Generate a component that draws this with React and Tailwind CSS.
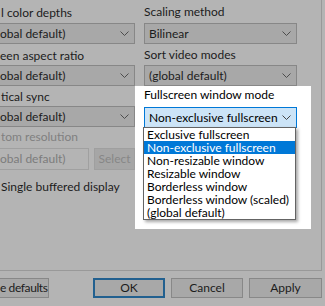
import React from "react";

const font = { fontFamily: "Lato, 'Liberation Sans', Arial, sans-serif" };

function Chevron({ color = "#4d4d4d" }) {
  return (
    <svg width="9" height="5" viewBox="0 0 9 5" className="shrink-0">
      <polyline points="0.5,0.5 4.5,4.5 8.5,0.5" fill="none" stroke={color} strokeWidth="1" />
    </svg>
  );
}

function Combo({ text, className = "", textClass = "pl-[4px]" }) {
  return (
    <div
      className={`flex h-[21px] items-center justify-between border border-[#878787] bg-[#a8a8a8] pr-[5px] text-[#1c1c1c] ${className}`}
    >
      <span className={`whitespace-nowrap leading-none ${textClass}`}>{text}</span>
      <Chevron />
    </div>
  );
}

function Label({ children, className = "" }) {
  return <div className={`h-[14px] whitespace-nowrap leading-[14px] text-[#1c1c1c] ${className}`}>{children}</div>;
}

const modes = [
  "Exclusive fullscreen",
  "Non-exclusive fullscreen",
  "Non-resizable window",
  "Resizable window",
  "Borderless window",
  "Borderless window (scaled)",
  "(global default)",
];

export default function App() {
  const selected = 1;

  return (
    <div className="flex h-[306px] w-[325px] flex-col overflow-hidden bg-[#b4b4b4] text-[12px]" style={font}>
      {/* tab panel */}
      <div className="flex h-[271px] w-[322px] shrink-0 items-start border-r border-b border-[#999999]">
        {/* left column, clipped by the window edge */}
        <div className="flex w-[135px] shrink-0 flex-col">
          <Label className="mt-[6px] pl-[1px]">l color depths</Label>
          <Combo text="obal default)" className="mt-[3px] border-l-0" textClass="pl-0" />
          <Label className="mt-[5px]">een aspect ratio</Label>
          <Combo text="obal default)" className="mt-[2px] border-l-0" textClass="pl-0" />
          <Label className="mt-[4px] pl-[1px]">tical sync</Label>
          <Combo text="obal default)" className="mt-[2px] border-l-0" textClass="pl-0" />
          <Label className="mt-[3px] pl-[1px] !text-[#808080]">tom resolution</Label>
          <div className="mt-[4px] flex h-[22px] gap-[5px]">
            <div className="flex w-[89px] items-center border border-l-0 border-[#a0a0a0] text-[#7c7c7c]">
              <span className="whitespace-nowrap leading-none">obal default)</span>
            </div>
            <div className="flex w-[41px] items-center justify-center border border-[#9f9f9f] bg-[#a6a6a6] text-[#868686]">
              <span className="leading-none">Select</span>
            </div>
          </div>
          <Label className="mt-[10px] pl-[1px]">Single buffered display</Label>
        </div>

        {/* right column */}
        <div className="ml-[9px] flex w-[153px] shrink-0 flex-col">
          <Label className="mt-[5px]">Scaling method</Label>
          <Combo text="Bilinear" className="mt-[4px]" />
          <Label className="mt-[4px]">Sort video modes</Label>
          <Combo text="(global default)" className="mt-[3px]" />

          {/* highlighted area */}
          <div className="relative -ml-[9px] h-[143px] w-[176px] bg-white pl-[9px]">
            <Label className="mt-[2px] !text-black">Fullscreen window mode</Label>
            <div className="mt-[5px] flex h-[21px] w-[153px] items-center justify-between border border-[#0078d7] bg-[#cce4f7] pr-[5px] text-black">
              <span className="whitespace-nowrap pl-[4px] leading-none">Non-exclusive fullscreen</span>
              <Chevron color="#444444" />
            </div>
            <ul className="absolute top-[41px] left-[8px] w-[153px] border border-[#646464] bg-white shadow-[2px_2px_3px_rgba(0,0,0,0.35)]">
              {modes.map((m, i) => (
                <li
                  key={m}
                  className={`flex h-[13px] items-center whitespace-nowrap pl-[3px] leading-none ${
                    i === selected ? "bg-[#0078d7] text-white" : "text-black"
                  }`}
                >
                  {m}
                </li>
              ))}
            </ul>
          </div>
        </div>
      </div>

      {/* dialog buttons */}
      <div className="mt-[7px] flex h-[20px] text-[#1c1c1c]">
        <div className="flex w-[49px] items-center overflow-hidden whitespace-nowrap border border-l-0 border-[#888888] bg-[#a8a8a8] tracking-[-0.4px]">
          e defaults
        </div>
        <div className="ml-[44px] flex w-[72px] items-center justify-center border-2 border-[#22608f] bg-[#a8a8a8]">
          OK
        </div>
        <div className="ml-[6px] flex w-[72px] items-center justify-center border border-[#888888] bg-[#a8a8a8]">
          Cancel
        </div>
        <div className="ml-[6px] flex w-[73px] items-center justify-center border border-[#888888] bg-[#a8a8a8]">
          Apply
        </div>
      </div>
    </div>
  );
}
